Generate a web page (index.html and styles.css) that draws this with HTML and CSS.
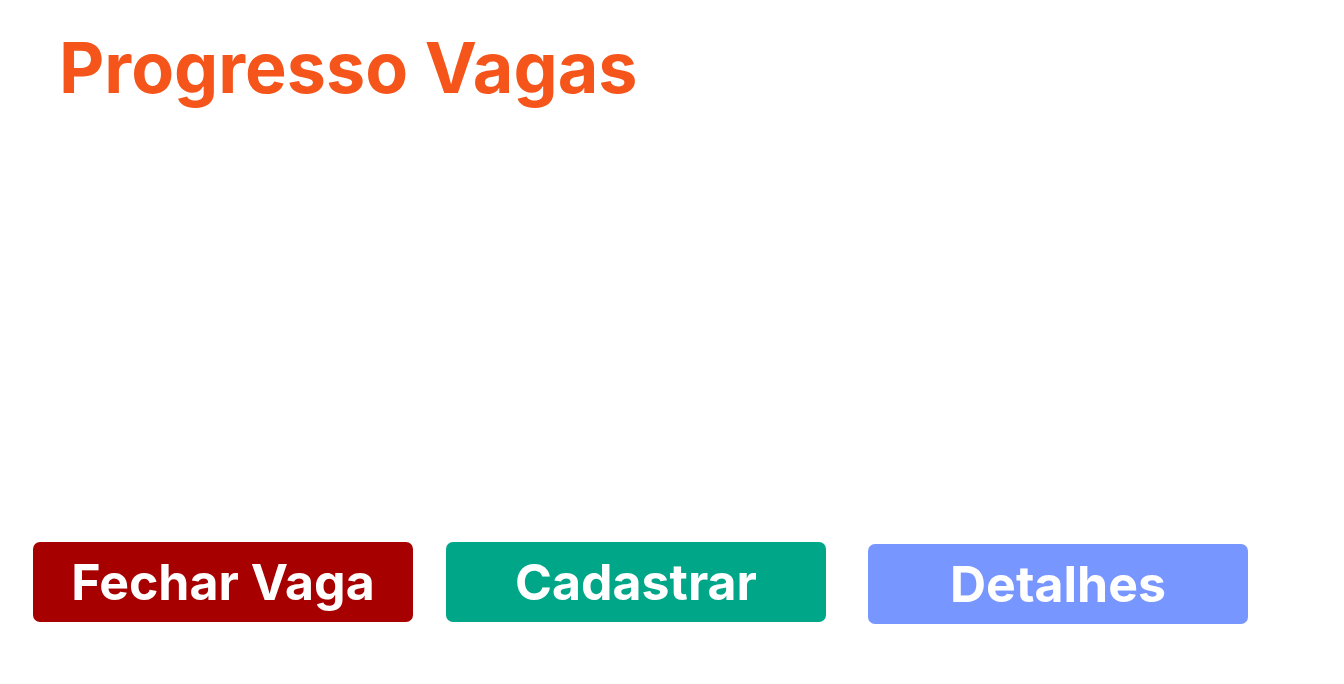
FILE: index.html
```html
<!DOCTYPE html>
<html lang="pt-BR">
<head>
<meta charset="utf-8">
<title>Progresso Vagas</title>
<link rel="stylesheet" href="styles.css">
</head>
<body>
<main class="page">
  <h1 class="title">Progresso Vagas</h1>
  <div class="chart"></div>
  <div class="actions">
    <button class="btn btn-close">Fechar Vaga</button>
    <button class="btn btn-create">Cadastrar</button>
    <button class="btn btn-details">Detalhes</button>
  </div>
</main>
</body>
</html>
```

FILE: styles.css
```css
html, body {
  margin: 0;
  padding: 0;
  background: #ffffff;
}
body {
  font-family: Inter, "Noto Sans", "Liberation Sans", sans-serif;
}
.page {
  display: flex;
  flex-direction: column;
  padding: 0 0 0 33px;
}
.title {
  margin: 25px 0 0 26px;
  font-size: 70px;
  font-weight: 700;
  line-height: 85px;
  color: #f5551a;
}
.chart {
  height: 432px;
}
.actions {
  display: flex;
  align-items: flex-start;
}
.btn {
  width: 380px;
  height: 80px;
  border: none;
  border-radius: 7px;
  color: #ffffff;
  font-family: Inter, "Noto Sans", "Liberation Sans", sans-serif;
  font-size: 50px;
  font-weight: 700;
  padding: 0;
  line-height: 80px;
}
.btn-close {
  background: #a70000;
}
.btn-create {
  margin-left: 33px;
  background: #00a688;
}
.btn-details {
  margin-left: 42px;
  margin-top: 2px;
  background: #7896ff;
}
```
